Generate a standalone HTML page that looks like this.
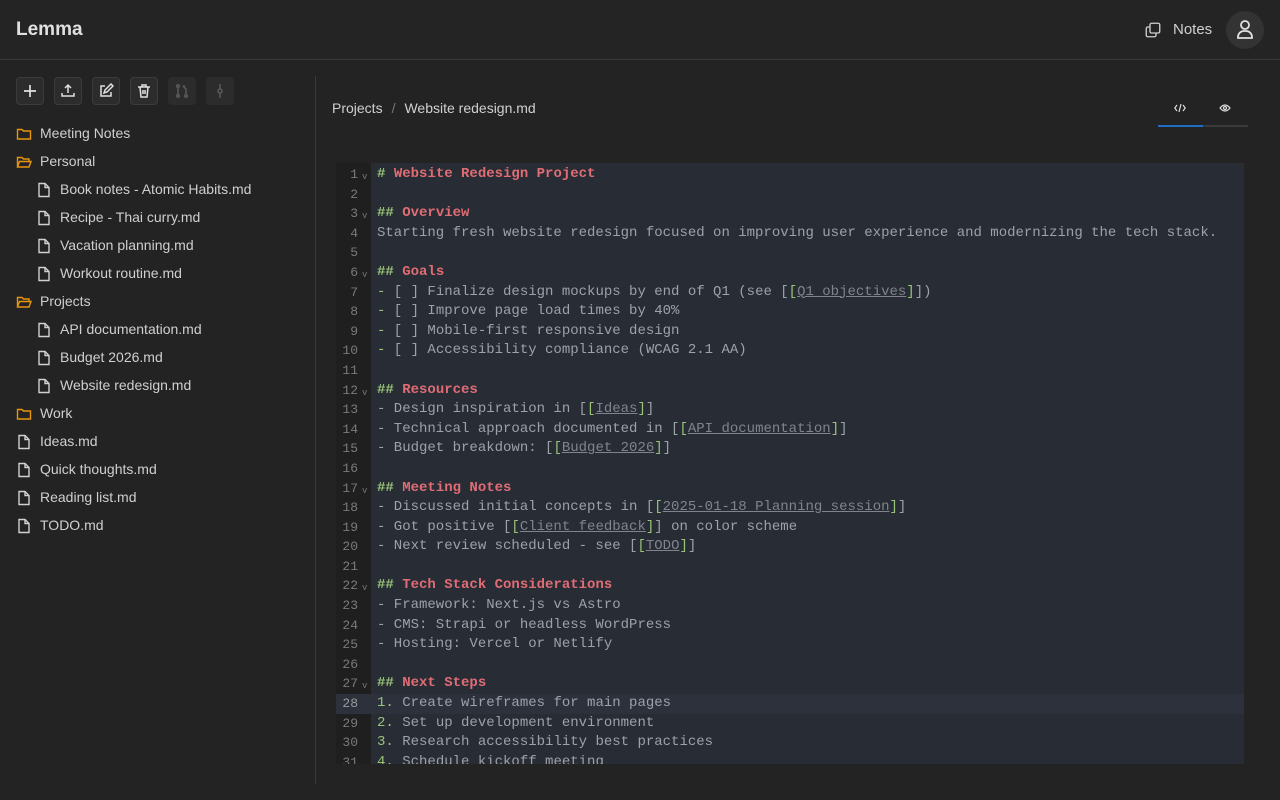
<!DOCTYPE html>
<html><head><meta charset="utf-8"><style>
*{box-sizing:border-box;margin:0;padding:0}
body{width:1280px;height:800px;background:#232323;font-family:"Liberation Sans",sans-serif;color:#d4d4d4;position:relative;overflow:hidden}
.hdr{position:absolute;left:0;top:0;width:1280px;height:60px;border-bottom:1px solid #3a3a3a;background:#242424}
.logo{position:absolute;left:16px;top:19px;font-size:19px;font-weight:bold;color:#e0e0e0}
.notes{position:absolute;left:1144px;top:21px;font-size:15px;color:#d0d0d0}
.notes svg{position:absolute;left:0;top:0}
.notes span{position:absolute;left:29px;top:0}
.av{position:absolute;left:1226px;top:11px;width:38px;height:38px;border-radius:50%;background:#333}
.side{position:absolute;left:0;top:60px;width:316px;height:740px;border-right:1px solid #3a3a3a}
.divfix{position:absolute;left:314px;top:60px;width:3px;height:16px;background:#232323}
.divfix2{position:absolute;left:314px;top:784px;width:3px;height:16px;background:#232323}
.btn{position:absolute;top:77px;width:28px;height:28px;border:1px solid #3c3c3c;border-radius:4px;background:#2c2c2c}
.btn svg{position:absolute;left:5px;top:5px}
.btn.dis{border-color:#2c2c2c;background:#2c2c2c}
.it{position:absolute;font-size:14px;color:#cfcfcf;height:20px;line-height:20px}
.it svg{position:absolute;left:0;top:3px}
.it span{position:absolute;left:24px;white-space:nowrap}
.crumb{position:absolute;left:332px;top:100px;font-size:14px;color:#d0d0d0}
.crumb .sep{color:#777;margin:0 9px}
.tabs{position:absolute;left:1158px;top:125px;width:90px;height:2px;background:#3a3a3a}
.tabs div{width:45px;height:2px;background:#1e6fc4}
.ed{position:absolute;left:336px;top:163px;width:908px;height:601px;background:#282c34;overflow:hidden}
.gut{position:absolute;left:0;top:0;width:35px;height:601px;background:#1f1f1f}
.lines{position:absolute;left:0;top:2px;width:908px;font-family:"Liberation Mono",monospace;font-size:14px}
.l{height:19.6px;line-height:19.6px;position:relative;white-space:pre}
.l .n{position:absolute;left:0;width:22px;text-align:right;color:#7a7a7a;font-size:13px}
.l .f{position:absolute;left:26px;top:3px;color:#777;font-size:9px}
.l .t{position:absolute;left:41px;color:#9da1a8}
.act{background:#2c313c}
.act .n{color:#9a9a9a}
.h{color:#e06c75;font-weight:bold}.m{color:#98c379;font-weight:bold}.g{color:#98c379}
.k{color:#7f848e;text-decoration:underline}
</style></head><body>
<div class="hdr">
<div class="logo">Lemma</div>
<div class="notes"><svg width="18" height="18" viewBox="0 0 24 24" fill="none" stroke="#cfcfcf" stroke-width="1.8"><rect x="8" y="3" width="13" height="13" rx="2"/><path d="M16 16v3a2 2 0 0 1-2 2H5a2 2 0 0 1-2-2v-9a2 2 0 0 1 2-2h3"/></svg><span>Notes</span></div>
<div class="av"><svg width="38" height="38" viewBox="0 0 38 38" fill="none" stroke="#e0e0e0" stroke-width="1.8"><circle cx="19" cy="14" r="4"/><path d="M12 27v-1a6 6 0 0 1 6-6h2a6 6 0 0 1 6 6v1z"/></svg></div>
</div>
<div class="side"></div><div class="divfix"></div><div class="divfix2"></div>
<div class="btn" style="left:16px"><svg width="16" height="16" viewBox="0 0 16 16" stroke="#e0e0e0" stroke-width="1.7"><path d="M8 2v12M2 8h12"/></svg></div>
<div class="btn" style="left:54px"><svg width="16" height="16" viewBox="0 0 16 16" fill="none" stroke="#e0e0e0" stroke-width="1.5"><path d="M8 10V2M5 5l3-3 3 3M2 10v3h12v-3"/></svg></div>
<div class="btn" style="left:92px"><svg width="16" height="16" viewBox="0 0 16 16" fill="none" stroke="#e0e0e0" stroke-width="1.5"><path d="M7 3H3v10h10V9M6 10l1-3 6-6 2 2-6 6z"/></svg></div>
<div class="btn" style="left:130px"><svg width="16" height="16" viewBox="0 0 16 16" fill="none" stroke="#e0e0e0" stroke-width="1.5"><path d="M2 4h12M6 4V2h4v2M4 4l1 10h6l1-10M7 7v4M9 7v4"/></svg></div>
<div class="btn dis" style="left:168px"><svg width="16" height="16" viewBox="0 0 16 16" fill="none" stroke="#5a5a5a" stroke-width="1.5"><circle cx="4" cy="3" r="1.3"/><circle cx="4" cy="13" r="1.3"/><circle cx="12" cy="13" r="1.3"/><path d="M4 4v8M12 12V6l-3-3M9 3h2"/></svg></div>
<div class="btn dis" style="left:206px"><svg width="16" height="16" viewBox="0 0 16 16" fill="none" stroke="#5a5a5a" stroke-width="1.5"><circle cx="8" cy="8" r="2"/><path d="M8 1v5M8 10v5"/></svg></div>
<div class="it" style="left:16px;top:123px"><svg width="16" height="16" viewBox="0 0 16 16" fill="none" stroke="#e8950f" stroke-width="1.4"><path d="M1.5 3.5h4.5l1.5 1.5h7v8h-13z"/></svg><span>Meeting Notes</span></div>
<div class="it" style="left:16px;top:151px"><svg width="16" height="16" viewBox="0 0 16 16" fill="none" stroke="#e8950f" stroke-width="1.4"><path d="M1.5 13V3.5h4.5l1.5 1.5h5.5v2M1.5 13l2-5.5h11.5l-2 5.5z"/></svg><span>Personal</span></div>
<div class="it" style="left:36px;top:179px"><svg width="16" height="16" viewBox="0 0 16 16" fill="none" stroke="#d0d0d0" stroke-width="1.4"><path d="M3 1.5h6l4 4v9h-10zM9 1.5v4h4"/></svg><span>Book notes - Atomic Habits.md</span></div>
<div class="it" style="left:36px;top:207px"><svg width="16" height="16" viewBox="0 0 16 16" fill="none" stroke="#d0d0d0" stroke-width="1.4"><path d="M3 1.5h6l4 4v9h-10zM9 1.5v4h4"/></svg><span>Recipe - Thai curry.md</span></div>
<div class="it" style="left:36px;top:235px"><svg width="16" height="16" viewBox="0 0 16 16" fill="none" stroke="#d0d0d0" stroke-width="1.4"><path d="M3 1.5h6l4 4v9h-10zM9 1.5v4h4"/></svg><span>Vacation planning.md</span></div>
<div class="it" style="left:36px;top:263px"><svg width="16" height="16" viewBox="0 0 16 16" fill="none" stroke="#d0d0d0" stroke-width="1.4"><path d="M3 1.5h6l4 4v9h-10zM9 1.5v4h4"/></svg><span>Workout routine.md</span></div>
<div class="it" style="left:16px;top:291px"><svg width="16" height="16" viewBox="0 0 16 16" fill="none" stroke="#e8950f" stroke-width="1.4"><path d="M1.5 13V3.5h4.5l1.5 1.5h5.5v2M1.5 13l2-5.5h11.5l-2 5.5z"/></svg><span>Projects</span></div>
<div class="it" style="left:36px;top:319px"><svg width="16" height="16" viewBox="0 0 16 16" fill="none" stroke="#d0d0d0" stroke-width="1.4"><path d="M3 1.5h6l4 4v9h-10zM9 1.5v4h4"/></svg><span>API documentation.md</span></div>
<div class="it" style="left:36px;top:347px"><svg width="16" height="16" viewBox="0 0 16 16" fill="none" stroke="#d0d0d0" stroke-width="1.4"><path d="M3 1.5h6l4 4v9h-10zM9 1.5v4h4"/></svg><span>Budget 2026.md</span></div>
<div class="it" style="left:36px;top:375px"><svg width="16" height="16" viewBox="0 0 16 16" fill="none" stroke="#d0d0d0" stroke-width="1.4"><path d="M3 1.5h6l4 4v9h-10zM9 1.5v4h4"/></svg><span>Website redesign.md</span></div>
<div class="it" style="left:16px;top:403px"><svg width="16" height="16" viewBox="0 0 16 16" fill="none" stroke="#e8950f" stroke-width="1.4"><path d="M1.5 3.5h4.5l1.5 1.5h7v8h-13z"/></svg><span>Work</span></div>
<div class="it" style="left:16px;top:431px"><svg width="16" height="16" viewBox="0 0 16 16" fill="none" stroke="#d0d0d0" stroke-width="1.4"><path d="M3 1.5h6l4 4v9h-10zM9 1.5v4h4"/></svg><span>Ideas.md</span></div>
<div class="it" style="left:16px;top:459px"><svg width="16" height="16" viewBox="0 0 16 16" fill="none" stroke="#d0d0d0" stroke-width="1.4"><path d="M3 1.5h6l4 4v9h-10zM9 1.5v4h4"/></svg><span>Quick thoughts.md</span></div>
<div class="it" style="left:16px;top:487px"><svg width="16" height="16" viewBox="0 0 16 16" fill="none" stroke="#d0d0d0" stroke-width="1.4"><path d="M3 1.5h6l4 4v9h-10zM9 1.5v4h4"/></svg><span>Reading list.md</span></div>
<div class="it" style="left:16px;top:515px"><svg width="16" height="16" viewBox="0 0 16 16" fill="none" stroke="#d0d0d0" stroke-width="1.4"><path d="M3 1.5h6l4 4v9h-10zM9 1.5v4h4"/></svg><span>TODO.md</span></div>
<div class="crumb">Projects<span class="sep">/</span>Website redesign.md</div>
<svg style="position:absolute;left:1174px;top:103px" width="12" height="10" viewBox="0 0 12 10" fill="none" stroke="#ddd" stroke-width="1.2"><path d="M3 2L0.8 5 3 8M9 2l2.2 3L9 8M7 1L5 9"/></svg>
<svg style="position:absolute;left:1219px;top:103px" width="12" height="10" viewBox="0 0 12 10" fill="none" stroke="#ddd" stroke-width="1.2"><path d="M1 5q5-6 10 0q-5 6-10 0z"/><circle cx="6" cy="5" r="1.5"/></svg>
<div class="tabs"><div></div></div>
<div class="ed"><div class="gut"></div><div class="lines">
<div class="l"><span class="n">1</span><span class="f">v</span><span class="t"><span class="m">#</span> <span class="h">Website Redesign Project</span></span></div>
<div class="l"><span class="n">2</span></div>
<div class="l"><span class="n">3</span><span class="f">v</span><span class="t"><span class="m">##</span> <span class="h">Overview</span></span></div>
<div class="l"><span class="n">4</span><span class="t">Starting fresh website redesign focused on improving user experience and modernizing the tech stack.</span></div>
<div class="l"><span class="n">5</span></div>
<div class="l"><span class="n">6</span><span class="f">v</span><span class="t"><span class="m">##</span> <span class="h">Goals</span></span></div>
<div class="l"><span class="n">7</span><span class="t"><span class="g">-</span> [ ] Finalize design mockups by end of Q1 (see [<span class="g">[</span><span class="k">Q1 objectives</span><span class="g">]</span>])</span></div>
<div class="l"><span class="n">8</span><span class="t"><span class="g">-</span> [ ] Improve page load times by 40%</span></div>
<div class="l"><span class="n">9</span><span class="t"><span class="g">-</span> [ ] Mobile-first responsive design</span></div>
<div class="l"><span class="n">10</span><span class="t"><span class="g">-</span> [ ] Accessibility compliance (WCAG 2.1 AA)</span></div>
<div class="l"><span class="n">11</span></div>
<div class="l"><span class="n">12</span><span class="f">v</span><span class="t"><span class="m">##</span> <span class="h">Resources</span></span></div>
<div class="l"><span class="n">13</span><span class="t">- Design inspiration in [<span class="g">[</span><span class="k">Ideas</span><span class="g">]</span>]</span></div>
<div class="l"><span class="n">14</span><span class="t">- Technical approach documented in [<span class="g">[</span><span class="k">API documentation</span><span class="g">]</span>]</span></div>
<div class="l"><span class="n">15</span><span class="t">- Budget breakdown: [<span class="g">[</span><span class="k">Budget 2026</span><span class="g">]</span>]</span></div>
<div class="l"><span class="n">16</span></div>
<div class="l"><span class="n">17</span><span class="f">v</span><span class="t"><span class="m">##</span> <span class="h">Meeting Notes</span></span></div>
<div class="l"><span class="n">18</span><span class="t">- Discussed initial concepts in [<span class="g">[</span><span class="k">2025-01-18 Planning session</span><span class="g">]</span>]</span></div>
<div class="l"><span class="n">19</span><span class="t">- Got positive [<span class="g">[</span><span class="k">Client feedback</span><span class="g">]</span>] on color scheme</span></div>
<div class="l"><span class="n">20</span><span class="t">- Next review scheduled - see [<span class="g">[</span><span class="k">TODO</span><span class="g">]</span>]</span></div>
<div class="l"><span class="n">21</span></div>
<div class="l"><span class="n">22</span><span class="f">v</span><span class="t"><span class="m">##</span> <span class="h">Tech Stack Considerations</span></span></div>
<div class="l"><span class="n">23</span><span class="t">- Framework: Next.js vs Astro</span></div>
<div class="l"><span class="n">24</span><span class="t">- CMS: Strapi or headless WordPress</span></div>
<div class="l"><span class="n">25</span><span class="t">- Hosting: Vercel or Netlify</span></div>
<div class="l"><span class="n">26</span></div>
<div class="l"><span class="n">27</span><span class="f">v</span><span class="t"><span class="m">##</span> <span class="h">Next Steps</span></span></div>
<div class="l act"><span class="n">28</span><span class="t"><span class="g">1.</span> Create wireframes for main pages</span></div>
<div class="l"><span class="n">29</span><span class="t"><span class="g">2.</span> Set up development environment</span></div>
<div class="l"><span class="n">30</span><span class="t"><span class="g">3.</span> Research accessibility best practices</span></div>
<div class="l"><span class="n">31</span><span class="t"><span class="g">4.</span> Schedule kickoff meeting</span></div>
</div></div>
</body></html>
